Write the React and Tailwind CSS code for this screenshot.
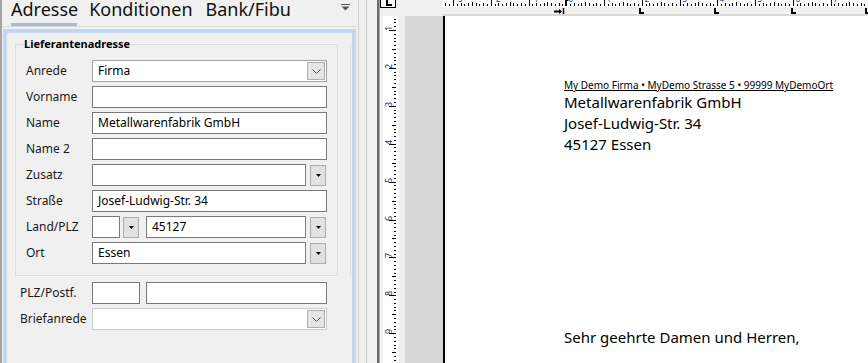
import React from "react";

function Tri() {
  return (
    <svg width="5" height="3" viewBox="0 0 5 3">
      <path d="M0 0h5L2.5 3z" fill="#000" />
    </svg>
  );
}

function Chevron() {
  return (
    <svg width="9" height="5" viewBox="0 0 9 5">
      <path d="M0.5 0.5l4 4 4-4" fill="none" stroke="#555" strokeWidth="1" />
    </svg>
  );
}

function TextBox({ w = "w-[235px]", value = "" }) {
  return (
    <div className={`${w} h-[22px] shrink-0 border border-[#7a7a7a] bg-white pl-[5px] text-[12px] leading-[20px] text-black`}>
      {value}
    </div>
  );
}

function DropBtn({ ml = "ml-[4px]" }) {
  return (
    <div className={`${ml} flex h-[21px] w-[16px] shrink-0 items-center justify-center border border-[#adadad] bg-[#e1e1e1]`}>
      <Tri />
    </div>
  );
}

function ComboBox({ value = "", border = "border-[#a3a3a3]" }) {
  return (
    <div className={`flex h-[22px] w-[235px] items-center border ${border} bg-white pl-[5px] text-[12px] text-black`}>
      <span className="flex-1 leading-[20px]">{value}</span>
      <div className="mr-px flex h-[18px] w-[18px] items-center justify-center border border-[#adadad] bg-[#e5e5e5]">
        <Chevron />
      </div>
    </div>
  );
}

function Row({ label, lw = "w-[66px]", children }) {
  return (
    <div className="flex h-[22px] items-center">
      <div className={`${lw} shrink-0 text-[12px] text-[#1a1a1a]`}>{label}</div>
      {children}
    </div>
  );
}

function LeftPanel() {
  return (
    <div className="flex w-[357px] shrink-0 flex-col border-l-2 border-[#a3a3a3]">
      <div className="flex h-[27px] shrink-0 border-b border-[#dadada] pl-[9px]">
        <div className="flex flex-col">
          <span className="text-[18px] leading-[18px] text-[#111]">Adresse</span>
          <div className="mt-[5px] h-[3px] w-[66px] bg-[#a3bdd2]" />
        </div>
        <span className="ml-[11px] text-[18px] leading-[18px] text-[#111]">Konditionen</span>
        <span className="ml-[13px] text-[18px] leading-[18px] text-[#111]">Bank/Fibu</span>
        <div className="ml-auto mr-[7px] mt-[4px]">
          <svg width="9" height="7" viewBox="0 0 9 7">
            <rect x="0" y="0" width="9" height="1" fill="#555" />
            <path d="M0.5 2.5h8L4.5 6.5z" fill="#555" />
          </svg>
        </div>
      </div>
      <div className="mx-px mt-[2px] flex flex-1 flex-col border-4 border-b-0 border-[#c6d6f1] pl-[8px] pt-[11px]">
        <div className="flex">
          <div className="relative flex w-[323px] flex-col gap-[4px] border border-[#dcdcdc] pb-[10px] pl-[10px] pt-[15px]">
            <span className="absolute -top-[8px] left-[7px] bg-[#f0f0f0] px-px text-[11px] font-bold leading-[14px] text-black">
              Lieferantenadresse
            </span>
            <Row label="Anrede">
              <ComboBox value="Firma" />
            </Row>
            <Row label="Vorname">
              <TextBox />
            </Row>
            <Row label="Name">
              <TextBox value="Metallwarenfabrik GmbH" />
            </Row>
            <Row label="Name 2">
              <TextBox />
            </Row>
            <Row label="Zusatz">
              <TextBox w="w-[214px]" />
              <DropBtn />
            </Row>
            <Row label="Straße">
              <TextBox value="Josef-Ludwig-Str. 34" />
            </Row>
            <Row label="Land/PLZ">
              <TextBox w="w-[28px]" />
              <DropBtn ml="ml-[3px]" />
              <div className="ml-[7px]">
                <TextBox w="w-[160px]" value="45127" />
              </div>
              <DropBtn />
            </Row>
            <Row label="Ort">
              <TextBox w="w-[214px]" value="Essen" />
              <DropBtn />
            </Row>
          </div>
          <div className="ml-[12px] mt-px h-[231px] w-px bg-[#dcdcdc]" />
        </div>
        <div className="mt-[6px] flex flex-col gap-[4px] pl-[5px]">
          <Row label="PLZ/Postf." lw="w-[72px]">
            <TextBox w="w-[48px]" />
            <div className="ml-[6px]">
              <TextBox w="w-[181px]" />
            </div>
          </Row>
          <Row label="Briefanrede" lw="w-[72px]">
            <ComboBox border="border-[#cccccc]" />
          </Row>
        </div>
      </div>
    </div>
  );
}

function Splitter() {
  return (
    <div className="flex w-[23px] shrink-0">
      <div className="ml-px w-px bg-[#d2d2d2]" />
      <div className="ml-[7px] w-px bg-[#c9c9c9]" />
      <div className="ml-[10px] w-[2px] bg-[#6a6a6a]" />
      <div className="w-px bg-[#a8a8a8]" />
    </div>
  );
}

function TopRuler() {
  const items = [];
  for (let i = -2; i <= 112; i++) {
    const x = Math.round(10 + i * 3.775) + 0.5;
    if (x < 0 || x > 426) continue;
    if (i % 10 === 0) {
      items.push(<line key={"t" + i} x1={x} x2={x} y1="0" y2="6" stroke="#000" />);
      items.push(
        <text key={"n" + i} x={x + 2} y="2" fontSize="8" fill="#2a3d7a" fontFamily="Noto Sans, sans-serif">
          {i / 10 - 3}
        </text>
      );
    } else if (i % 5 === 0) {
      items.push(<line key={"t" + i} x1={x} x2={x} y1="2" y2="6" stroke="#000" />);
    } else if (i % 2 === 0) {
      items.push(<line key={"t" + i} x1={x} x2={x} y1="3" y2="6" stroke="#000" />);
    } else {
      items.push(<line key={"t" + i} x1={x} x2={x} y1="4" y2="6" stroke="#000" />);
    }
  }
  return (
    <svg width="425" height="7" className="block bg-white">
      {items}
      <path d="M122.5 0v6M122.5 0.5h3" stroke="#000" strokeWidth="1" fill="none" />
    </svg>
  );
}

function TabStrip() {
  const stops = [197, 272, 349, 423];
  return (
    <svg width="425" height="7" className="block">
      <path d="M111 4.5h7" stroke="#000" strokeWidth="2" />
      <path d="M116 2l3 2.5-3 2.5z" fill="#000" />
      <path d="M120.5 1v6" stroke="#000" strokeWidth="1.5" />
      {stops.map((x) => (
        <path key={x} d={`M${x} 1v5h4`} stroke="#000" strokeWidth="2" fill="none" />
      ))}
    </svg>
  );
}

function VRuler() {
  const items = [];
  for (let i = 0; i < 100; i++) {
    const y = -23.9 + i * 3.79;
    if (y < 0 || y > 347) continue;
    const yy = Math.round(y) + 0.5;
    if (i % 10 === 0) {
      items.push(<line key={"l" + i} x1="6" x2="13" y1={yy} y2={yy} stroke="#000" />);
      items.push(
        <text
          key={"n" + i}
          transform={`translate(8.5 ${yy - 2}) rotate(-90)`}
          textAnchor="middle"
          fontSize="9"
          fill="#1f2f66"
          fontFamily="Noto Sans, sans-serif"
        >
          {i / 10}
        </text>
      );
    } else if (i % 5 === 0) {
      items.push(<line key={"l" + i} x1="9" x2="13" y1={yy} y2={yy} stroke="#000" />);
    } else {
      items.push(<line key={"l" + i} x1="11" x2="13" y1={yy} y2={yy} stroke="#000" />);
    }
  }
  return (
    <svg width="16" height="347" className="block">
      {items}
    </svg>
  );
}

function Report() {
  return (
    <div className="flex flex-1 flex-col">
      <div className="flex h-[16px] shrink-0">
        <div className="w-[63px] shrink-0">
          <div className="flex h-[8px] w-[16px] justify-center border-x border-b border-black bg-white">
            <svg width="6" height="6" viewBox="0 0 6 6" className="ml-px">
              <path d="M1 0v5h5" stroke="#000" strokeWidth="2" fill="none" />
            </svg>
          </div>
        </div>
        <div className="flex flex-1 flex-col">
          <TopRuler />
          <TabStrip />
          <div className="h-[2px] bg-[#d8d8d8]" />
        </div>
      </div>
      <div className="flex flex-1">
        <div className="ml-[3px] w-[16px] shrink-0 bg-white">
          <VRuler />
        </div>
        <div className="ml-[6px] w-[38px] shrink-0 bg-[#d7d7d7]" />
        <div className="flex-1 border-l-2 border-black bg-white pl-[119px] pt-[63px] text-black">
          <div className="text-[10px] leading-[12px] underline">
            My Demo Firma • MyDemo Strasse 5 • 99999 MyDemoOrt
          </div>
          <div className="mt-px text-[15px] leading-[21px]">
            <div>Metallwarenfabrik GmbH</div>
            <div>Josef-Ludwig-Str. 34</div>
            <div>45127 Essen</div>
          </div>
          <div className="mt-[172px] text-[15px] leading-[21px]">Sehr geehrte Damen und Herren,</div>
        </div>
      </div>
    </div>
  );
}

export default function App() {
  return (
    <div className="flex h-[363px] w-[868px] overflow-hidden bg-[#f0f0f0] font-['Noto_Sans',sans-serif] text-black">
      <LeftPanel />
      <Splitter />
      <Report />
    </div>
  );
}
